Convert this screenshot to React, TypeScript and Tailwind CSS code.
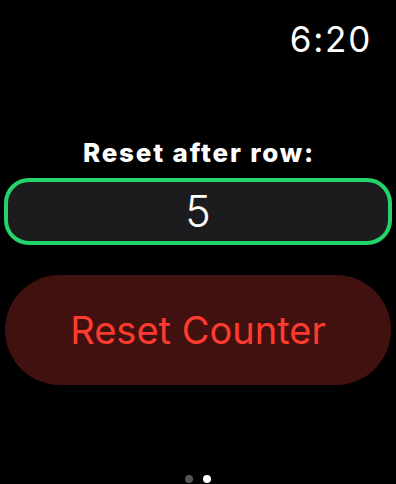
export default function App() {
  return (
    <div className="w-[396px] h-[484px] bg-black overflow-hidden flex flex-col font-['Inter',sans-serif] text-white">
      {/* Status bar */}
      <div className="flex justify-end pr-[24px] pt-[22px] text-[35px] leading-none tracking-[0.05em]">6:20</div>

      {/* Label */}
      <div className="mt-[83px] pl-[2px] text-center text-[26px] font-extrabold leading-none tracking-[0.07em]">Reset after row:</div>

      {/* Input */}
      <div className="mx-[4px] mt-[12px] h-[67px] rounded-[25px] border-[4px] border-[#22d46a] bg-[#1c1c1e] flex items-center justify-center text-[43px] font-light leading-none">
        5
      </div>

      {/* Reset button */}
      <button
        type="button"
        className="mx-[5px] mt-[30px] h-[110px] rounded-full bg-[#40110e] text-[#ff3b30] text-[38px] leading-none"
      >
        Reset Counter
      </button>

      {/* Page dots */}
      <div className="mt-[90px] flex justify-center gap-[10px]">
        <span className="w-[8px] h-[8px] rounded-full bg-[#555555]" />
        <span className="w-[8px] h-[8px] rounded-full bg-white" />
      </div>
    </div>
  );
}
